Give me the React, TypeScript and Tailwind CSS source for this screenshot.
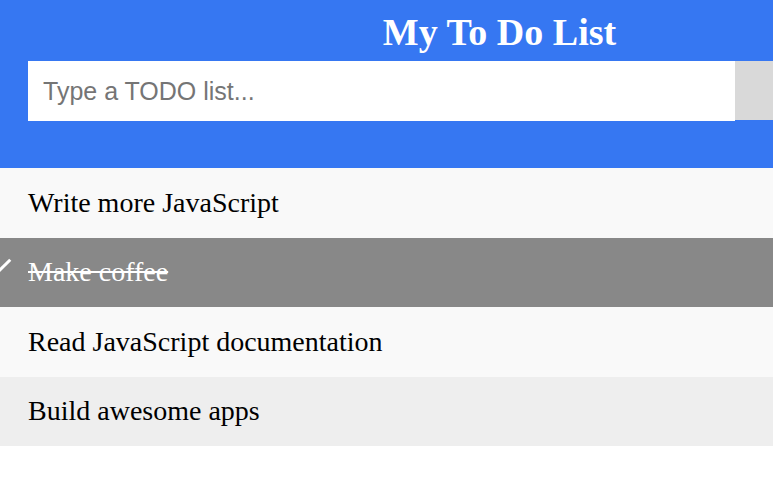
import { useState } from "react"

type Todo = {
    text: string
    done: boolean
}

const initialTodos: Todo[] = [
    { text: "Write more JavaScript", done: false },
    { text: "Make coffee", done: true },
    { text: "Read JavaScript documentation", done: false },
    { text: "Build awesome apps", done: false }
]

export default function App() {
    const [todos, setTodos] = useState<Todo[]>(initialTodos)
    const [value, setValue] = useState("")

    const addTodo = () => {
        if (!value.trim()) return
        setTodos([...todos, { text: value.trim(), done: false }])
        setValue("")
    }

    return (
        <div className="w-full min-h-screen overflow-hidden bg-white">
            <div className="w-[999px]">
                <div className="bg-[#3677f2] px-[28px] pt-[12px] pb-[47px] text-center text-white">
                    <h2 className="mb-[9px] text-[38px] font-bold leading-[40px] font-['Liberation_Serif',serif]">
                        My To Do List
                    </h2>
                    <div className="flex items-start">
                        <input
                            type="text"
                            value={value}
                            onChange={(e) => setValue(e.target.value)}
                            placeholder="Type a TODO list..."
                            className="h-[60px] w-[75%] bg-white px-[15px] text-[25px] text-black outline-none placeholder:text-[#757575] font-['Liberation_Sans',sans-serif]"
                        />
                        <span
                            onClick={addTodo}
                            className="flex h-[59px] w-[25%] cursor-pointer items-center justify-center bg-[#d9d9d9] text-[24px] text-[#555] font-['Liberation_Sans',sans-serif]"
                        >
                            Add
                        </span>
                    </div>
                </div>
                <ul className="font-['Liberation_Serif',serif]">
                    {todos.map((todo, i) => {
                        const bg = todo.done
                            ? "bg-[#888888] text-white line-through"
                            : i % 2 === 0
                              ? "bg-[#f9f9f9] text-black"
                              : "bg-[#eeeeee] text-black"
                        return (
                            <li
                                key={todo.text + i}
                                onClick={() =>
                                    setTodos(todos.map((t, j) => (j === i ? { ...t, done: !t.done } : t)))
                                }
                                className={`relative flex h-[69.5px] cursor-pointer items-center pl-[28px] text-[28px] ${bg}`}
                            >
                                {todo.done && (
                                    <span className="absolute left-[-5px] top-[16px] h-[22px] w-[10px] rotate-45 border-r-[3px] border-b-[3px] border-white" />
                                )}
                                {todo.text}
                            </li>
                        )
                    })}
                </ul>
            </div>
        </div>
    )
}
